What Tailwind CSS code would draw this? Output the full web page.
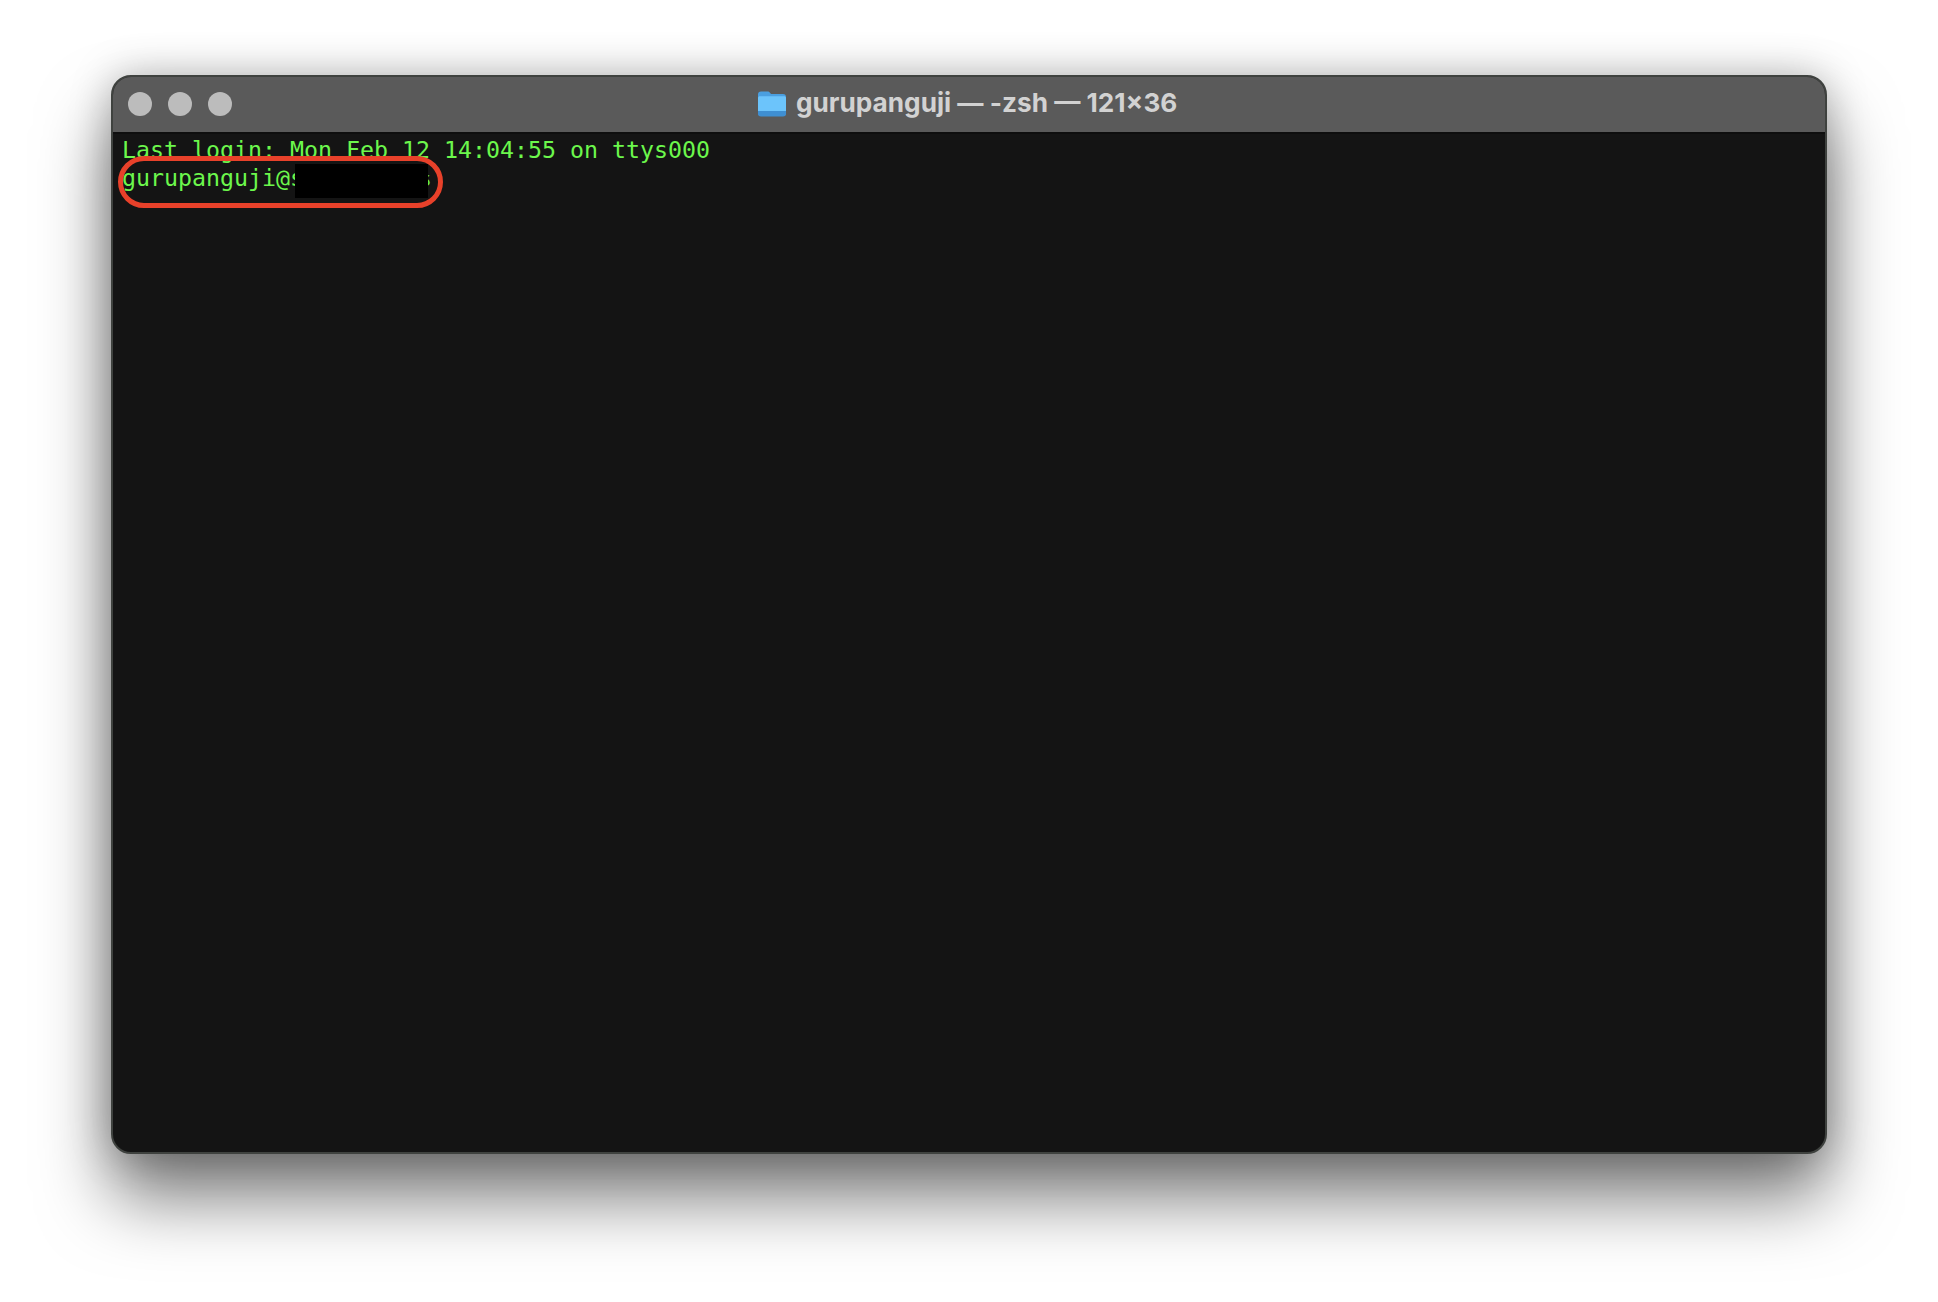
<!doctype html>
<html><head><meta charset="utf-8"><script src="https://cdn.jsdelivr.net/npm/@tailwindcss/browser@4"></script></head>
<body class="bg-white w-[1938px] h-[1302px] overflow-hidden">
<div class="pl-[111px] pt-[75px]">
<div class="relative w-[1716px] h-[1079px] rounded-[20px] flex flex-col border-[2px] border-[#3f423f] bg-[#141414] shadow-[0_44px_70px_rgba(0,0,0,0.52),0_0_40px_rgba(0,0,0,0.25)] overflow-hidden">
  <div class="relative h-[57px] shrink-0 bg-[#5a5a5a] border-b-[2px] border-b-[#0e0e0e] flex items-center pl-[15px] pb-[1px] gap-[16px]">
    <span class="w-[24px] h-[24px] rounded-full bg-[#bcbcbc]"></span>
    <span class="w-[24px] h-[24px] rounded-full bg-[#bcbcbc]"></span>
    <span class="w-[24px] h-[24px] rounded-full bg-[#bcbcbc]"></span>
    <div class="absolute left-[644px] top-0 h-[52px] flex items-center gap-[9px]">
      <svg width="30" height="28" viewBox="0 0 30 28">
        <path d="M1 5.500C1 3.500 2 2.500 4 2.500h6.500c1.200 0 1.800.4 2.500 1.200l1 1.300H26c2 0 3 1 3 3v16c0 2-1 3-3 3H4c-2 0-3-1-3-3z" fill="#4a9fe0"/>
        <path d="M1 9c0-1.200.8-1.800 2-1.800h24c1.200 0 2 .6 2 1.800v13H1z" fill="#6cc4fb"/>
        <path d="M1 22h28v2.500c0 2-1 3-3 3H4c-2 0-3-1-3-3z" fill="#3f8fd2"/>
      </svg>
      <span class="font-['Inter',sans-serif] font-bold text-[26.2px] leading-none text-[#d2d2d2] whitespace-nowrap">gurupanguji — -zsh — 121×36</span>
    </div>
  </div>
  <div class="pl-[9px] pt-[2px] font-['DejaVu_Sans_Mono',monospace] text-[23.25px] leading-[28px] text-[#6cf74c]">
    <div class="whitespace-pre">Last login: Mon Feb 12 14:04:55 on ttys000</div>
    <div class="whitespace-pre">gurupanguji@s        %</div>
  </div>
  <div class="absolute left-[182px] top-[87px] w-[133px] h-[34px] bg-black"></div>
  <div class="absolute left-[5px] top-[79px] w-[325px] h-[52px] rounded-[26px] border-[5px] border-[#e8412a]"></div>
</div>
</div>
</body></html>
